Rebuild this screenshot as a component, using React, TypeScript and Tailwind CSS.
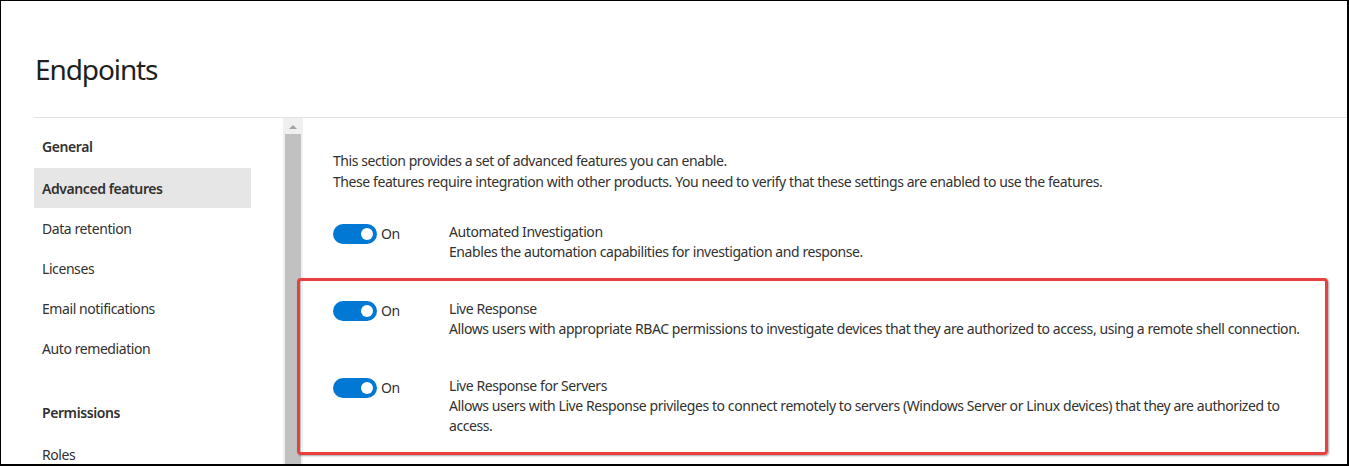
const navItems = [
  "Data retention",
  "Licenses",
  "Email notifications",
  "Auto remediation",
]

function Toggle() {
  return (
    <div className="flex items-center gap-[4px]">
      <span className="flex h-5 w-11 items-center justify-end rounded-full bg-[#0078d4] pr-[4px]">
        <span className="h-3 w-3 rounded-full bg-white" />
      </span>
      <span className="leading-5">On</span>
    </div>
  )
}

function FeatureRow({ title, desc }: { title: string; desc: string }) {
  return (
    <div className="flex">
      <div className="w-[116px] shrink-0 pt-[2px]">
        <Toggle />
      </div>
      <div className="min-w-0 flex-1 leading-5">
        <p>{title}</p>
        <p className="max-w-[860px]">{desc}</p>
      </div>
    </div>
  )
}

export default function App() {
  return (
    <div className="h-[466px] w-[1349px] overflow-hidden border-t border-l border-r-2 border-b-2 border-black bg-white font-['Noto_Sans',sans-serif] text-[14px] tracking-[-0.42px] text-[#323130]">
      {/* HEADER */}
      <h1 className="pl-[34px] pt-[50px] pb-[30px] text-[28px] leading-[36px] tracking-[-1.1px] text-[#201f1e]">
        Endpoints
      </h1>

      <div className="ml-[33px] flex h-[400px] border-t border-[#e1e1e1]">
        {/* NAV */}
        <nav className="w-[217px] shrink-0 pt-2">
          <div className="flex h-10 items-center pl-2 font-semibold">General</div>
          <div className="mt-[2px] flex h-10 items-center bg-[#e6e6e6] pl-2 font-semibold">
            Advanced features
          </div>
          {navItems.map((item) => (
            <div key={item} className="flex h-10 items-center pl-2">
              {item}
            </div>
          ))}
          <div className="mt-6 flex h-10 items-center pl-2 font-semibold">Permissions</div>
          <div className="mt-[2px] flex h-10 items-center pl-2">Roles</div>
        </nav>

        {/* SCROLLBAR */}
        <div className="ml-[32px] flex w-5 shrink-0 flex-col items-center bg-[#f0f0f0] pt-[7px]">
          <span className="h-0 w-0 border-x-[4px] border-b-[4px] border-x-transparent border-b-[#a3a3a3]" />
          <span className="mt-[5px] w-4 flex-1 bg-[#c1c1c1]" />
        </div>

        {/* CONTENT */}
        <div className="min-w-0 flex-1 pl-[30px] pr-[19px] pt-[32px]">
          <p className="leading-[21px]">
            This section provides a set of advanced features you can enable.
            <br />
            These features require integration with other products. You need to verify that these
            settings are enabled to use the features.
          </p>

          <div className="mt-[30px]">
            <FeatureRow
              title="Automated Investigation"
              desc="Enables the automation capabilities for investigation and response."
            />
          </div>

          <div className="relative mt-[37px] space-y-[37px]">
            <FeatureRow
              title="Live Response"
              desc="Allows users with appropriate RBAC permissions to investigate devices that they are authorized to access, using a remote shell connection."
            />
            <FeatureRow
              title="Live Response for Servers"
              desc="Allows users with Live Response privileges to connect remotely to servers (Windows Server or Linux devices) that they are authorized to access."
            />
            {/* highlight box */}
            <div className="pointer-events-none absolute -top-[21px] -bottom-[19px] -left-[36px] right-0 rounded-[4px] border-[3px] border-[#e8403f] shadow-[1px_1px_2px_rgba(0,0,0,0.35)]" />
          </div>
        </div>
      </div>
    </div>
  )
}
